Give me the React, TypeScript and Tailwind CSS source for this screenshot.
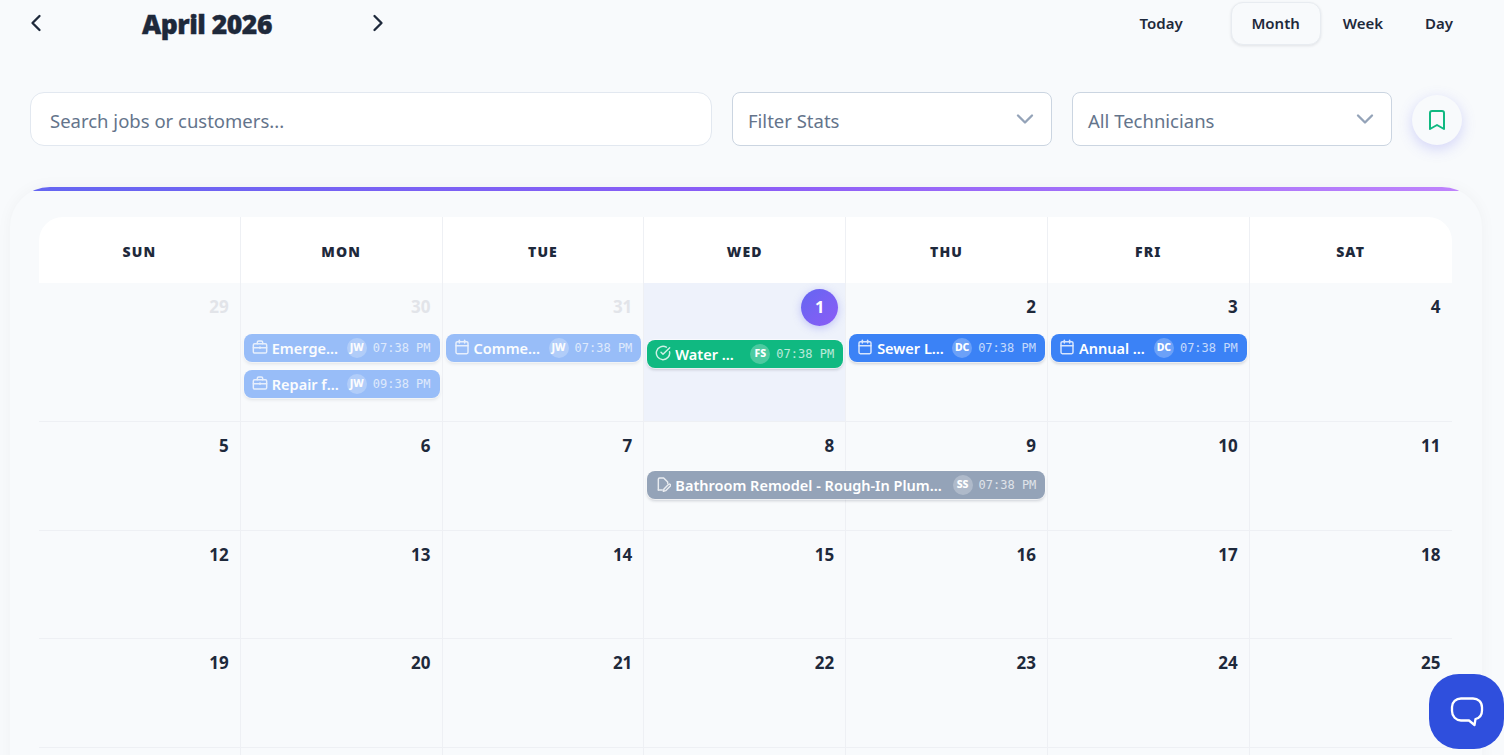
import { Calendar, ChevronDown, ChevronLeft, ChevronRight, Bookmark, CircleCheckBig } from "lucide-react";

type Job = {
  title: string;
  initials: string;
  time: string;
  color: string;
  icon: "job" | "cal" | "done" | "draft";
  wide?: boolean;
  faded?: boolean;
};

type Day = { n: number; muted?: boolean; today?: boolean; jobs?: Job[] };

const weeks: Day[][] = [
  [
    { n: 29, muted: true },
    {
      n: 30,
      muted: true,
      jobs: [
        { title: "Emergency Leak Repair", initials: "JW", time: "07:38 PM", color: "bg-[#3b82f6]", icon: "job", faded: true },
        { title: "Repair faucet", initials: "JW", time: "09:38 PM", color: "bg-[#3b82f6]", icon: "job", faded: true },
      ],
    },
    {
      n: 31,
      muted: true,
      jobs: [{ title: "Commercial Inspection", initials: "JW", time: "07:38 PM", color: "bg-[#3b82f6]", icon: "cal", faded: true }],
    },
    { n: 1, today: true, jobs: [{ title: "Water Heater Install", initials: "FS", time: "07:38 PM", color: "bg-[#10b981]", icon: "done" }] },
    { n: 2, jobs: [{ title: "Sewer Line Cleaning", initials: "DC", time: "07:38 PM", color: "bg-[#3b82f6]", icon: "cal" }] },
    { n: 3, jobs: [{ title: "Annual Maintenance", initials: "DC", time: "07:38 PM", color: "bg-[#3b82f6]", icon: "cal" }] },
    { n: 4 },
  ],
  [
    { n: 5 },
    { n: 6 },
    { n: 7 },
    {
      n: 8,
      jobs: [{ title: "Bathroom Remodel - Rough-In Plumbing Work", initials: "SS", time: "07:38 PM", color: "bg-[#94a3b8]", icon: "draft", wide: true }],
    },
    { n: 9 },
    { n: 10 },
    { n: 11 },
  ],
  [{ n: 12 }, { n: 13 }, { n: 14 }, { n: 15 }, { n: 16 }, { n: 17 }, { n: 18 }],
  [{ n: 19 }, { n: 20 }, { n: 21 }, { n: 22 }, { n: 23 }, { n: 24 }, { n: 25 }],
  [{ n: 26 }, { n: 27 }, { n: 28 }, { n: 29 }, { n: 30 }, { n: 1, muted: true }, { n: 2, muted: true }],
];

const rowHeights = ["h-[139px]", "h-[109px]", "h-[108px]", "h-[109px]", "h-[108px]"];

function JobIcon({ icon }: { icon: Job["icon"] }) {
  const cls = "w-[16px] h-[16px] shrink-0 -mt-[2px] opacity-80";
  if (icon === "cal") return <Calendar className={cls} strokeWidth={2.2} />;
  if (icon === "done") return <CircleCheckBig className={cls} strokeWidth={2.2} />;
  if (icon === "job")
    return (
      <svg viewBox="0 0 24 24" className={cls} fill="none" stroke="currentColor" strokeWidth="2.2" strokeLinecap="round" strokeLinejoin="round">
        <rect x="2" y="7" width="20" height="14" rx="2" />
        <path d="M16 7V5a2 2 0 0 0-2-2h-4a2 2 0 0 0-2 2v2" />
        <path d="M2 13h20" />
        <path d="M12 12v2" />
      </svg>
    );
  return (
    <svg viewBox="0 0 24 24" className={cls} fill="none" stroke="currentColor" strokeWidth="2.2" strokeLinecap="round" strokeLinejoin="round">
      <path d="M5 21V5a2 2 0 0 1 2-2h6l6 6v2" />
      <path d="M5 21h6" />
      <path d="M20.5 12.5a1.8 1.8 0 0 1 2.5 2.5L16 22l-3.5 1 1-3.5z" />
    </svg>
  );
}

function JobChip({ job }: { job: Job }) {
  return (
    <div
      className={`flex items-center h-[28px] pl-[8px] pr-[9px] rounded-[8px] text-white shadow-[0_0_0_1px_rgba(255,255,255,0.6),0_2px_3px_rgba(15,23,42,0.18)] ${job.color} ${
        job.wide ? "w-[398px] relative z-10 -mt-[2px]" : "w-full"
      } ${job.faded ? "opacity-50" : ""}`}
    >
      <JobIcon icon={job.icon} />
      <span className="ml-[4px] flex-1 min-w-0 truncate text-[14.5px] leading-[20px] font-semibold">{job.title}</span>
      <span className="ml-[8px] w-[20px] h-[20px] shrink-0 rounded-full bg-white/25 flex items-center justify-center text-[10.5px] font-extrabold">
        {job.initials}
      </span>
      <span className="ml-[6px] shrink-0 font-['DejaVu_Sans_Mono',monospace] text-[12px] leading-none font-medium opacity-70">{job.time}</span>
    </div>
  );
}

function DayCell({ day, last }: { day: Day; last: boolean }) {
  return (
    <div className={`min-w-0 flex flex-col pl-[3px] pr-[2px] ${day.today ? "bg-[#eef2fb]" : ""} ${last ? "" : "border-r border-[#eef0f4]"}`}>
      {day.today ? (
        <div className="flex justify-end pt-[6px] pr-[5px] mb-[14px]">
          <span className="w-[37px] h-[37px] rounded-full bg-gradient-to-br from-[#6366f1] to-[#8b5cf6] text-white text-[16.5px] font-bold flex items-center justify-center shadow-[0_2px_8px_rgba(99,102,241,0.35)]">
            {day.n}
          </span>
        </div>
      ) : (
        <div className={`pt-[12px] pr-[9px] mb-[15px] text-right text-[17px] leading-[24px] font-bold ${day.muted ? "text-[#e2e4e9]" : "text-[#1e293b]"}`}>
          {day.n}
        </div>
      )}
      <div className="flex flex-col gap-[8px]">
        {day.jobs?.map((job) => (
          <JobChip key={job.title} job={job} />
        ))}
      </div>
    </div>
  );
}

export default function App() {
  return (
    <div className="relative h-[755px] overflow-hidden bg-[#f8fafc] text-[#1e293b] font-['Noto_Sans',sans-serif]">
      <div className="flex items-center h-[46px] pl-[26px] pr-[51px]">
        <button className="w-[20px] flex justify-center">
          <ChevronLeft className="w-[28px] h-[28px] shrink-0" strokeWidth={2} />
        </button>
        <h1 className="w-[322px] pt-[2px] text-center text-[26.5px] leading-[46px] font-black tracking-[-0.5px] text-[#1e293b] [-webkit-text-stroke:0.4px_#1e293b]">
          April 2026
        </h1>
        <button className="w-[20px] flex justify-center">
          <ChevronRight className="w-[28px] h-[28px] shrink-0" strokeWidth={2} />
        </button>
        <div className="ml-auto flex items-center text-[15px] font-semibold">
          <span className="mr-[48px]">Today</span>
          <span className="w-[90px] h-[43px] flex items-center justify-center rounded-[12px] bg-[#f8fafc] border border-[#e8ecf1] shadow-[0_1px_3px_rgba(15,23,42,0.1)]">
            Month
          </span>
          <span className="ml-[22px]">Week</span>
          <span className="ml-[42px]">Day</span>
        </div>
      </div>

      <div className="flex items-center gap-[20px] mt-[46px] pl-[30px] pr-[42px]">
        <div className="flex-1 h-[54px] flex items-center pl-[19px] pt-[3px] rounded-[14px] bg-white border border-[#e2e8f0] text-[18.5px] text-[#64748b]">
          Search jobs or customers...
        </div>
        <div className="w-[320px] h-[54px] flex items-center justify-between pl-[15px] pr-[12px] pt-[3px] rounded-[8px] bg-white border border-[#cbd5e1] text-[18.5px] text-[#64748b]">
          Filter Stats
          <ChevronDown className="w-[28px] h-[28px] -mt-[3px] text-[#94a3b8]" strokeWidth={2} />
        </div>
        <div className="w-[320px] h-[54px] flex items-center justify-between pl-[15px] pr-[12px] pt-[3px] rounded-[8px] bg-white border border-[#cbd5e1] text-[18.5px] text-[#64748b]">
          All Technicians
          <ChevronDown className="w-[28px] h-[28px] -mt-[3px] text-[#94a3b8]" strokeWidth={2} />
        </div>
        <button className="w-[50px] h-[50px] mt-[2px] flex items-center justify-center rounded-full bg-[#f8fafc] shadow-[0_4px_14px_rgba(99,102,241,0.25)]">
          <Bookmark className="w-[24px] h-[24px] text-[#10b981]" strokeWidth={2} />
        </button>
      </div>

      <div className="relative mt-[41px] ml-[10px] mr-[22px] h-[700px] rounded-t-[40px] overflow-hidden bg-[#f8fafc] shadow-[0_0_16px_rgba(15,23,42,0.04)]">
        <div className="h-[4px] bg-gradient-to-r from-[#6366f1] via-[#8b5cf6] to-[#c084fc]" />
        <div className="pt-[26px] pl-[29px] pr-[30.5px]">
          <div className="grid grid-cols-7 h-[66px] bg-white rounded-t-[24px]">
            {["SUN", "MON", "TUE", "WED", "THU", "FRI", "SAT"].map((d, i) => (
              <div
                key={d}
                className={`flex items-center justify-center pt-[2px] text-[14px] font-black tracking-[1.1px] text-[#1e293b] ${i < 6 ? "border-r border-[#eef0f4]" : ""}`}
              >
                {d}
              </div>
            ))}
          </div>
          {weeks.map((week, w) => (
            <div key={w} className={`grid grid-cols-7 border-b border-[#eef0f4] ${rowHeights[w]}`}>
              {week.map((day, i) => (
                <DayCell key={i} day={day} last={i === 6} />
              ))}
            </div>
          ))}
        </div>
      </div>

      <button className="absolute left-[1429px] top-[674px] w-[75px] h-[75px] rounded-[30px] bg-[#2f4fdd] flex items-center justify-center">
        <svg viewBox="0 0 34 34" className="w-[34px] h-[34px] mt-[2px]" fill="none" stroke="white" strokeWidth="2.3" strokeLinejoin="round">
          <path d="M11 2.5h12c5 0 9 3.5 9 9v3c0 4.5-2.5 7.500-6.500 8.500l-1 6-5.500-4.500H11c-5 0-9-4-9-9.500v-4C2 6 6 2.500 11 2.500z" />
        </svg>
      </button>
    </div>
  );
}
